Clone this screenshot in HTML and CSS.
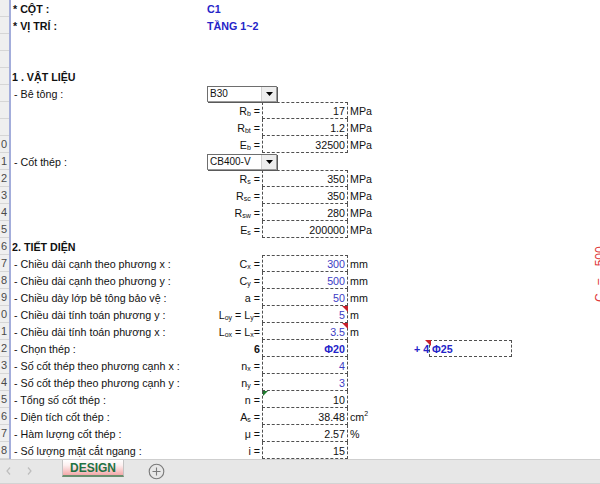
FILE: index.html
```html
<!DOCTYPE html>
<html lang="vi">
<head>
<meta charset="utf-8">
<title>DESIGN</title>
<link rel="stylesheet" href="styles.css">
</head>
<body>
<div class="sheet">
  <div class="row"><div class="rh"></div><div class="sep"></div><div class="cell a bold pad2">* CỘT :</div><div class="cell b bold blue2 wide">C1</div><div></div><div></div><div></div><div></div><div></div></div>
  <div class="row"><div class="rh"></div><div class="sep"></div><div class="cell a bold pad2">* VỊ TRÍ :</div><div class="cell b bold blue2 wide">TẦNG 1~2</div><div></div><div></div><div></div><div></div><div></div></div>
  <div class="row"><div class="rh"></div><div class="sep"></div><div></div><div></div><div></div><div></div><div></div><div></div><div></div></div>
  <div class="row"><div class="rh"></div><div class="sep"></div><div></div><div></div><div></div><div></div><div></div><div></div><div></div></div>
  <div class="row"><div class="rh"></div><div class="sep"></div><div class="cell a bold pad1">1 . VẬT LIỆU</div><div></div><div></div><div></div><div></div><div></div><div></div></div>
  <div class="row"><div class="rh"></div><div class="sep"></div><div class="cell a pad3">- Bê tông :</div><div class="b"><div class="dd"><span class="dd-text">B30</span><span class="dd-btn"><svg width="7" height="4" viewBox="0 0 7 4"><path d="M0 0h7L3.5 4z" fill="#000"/></svg></span></div></div><div></div><div></div><div></div><div></div><div></div></div>
  <div class="row"><div class="rh"></div><div class="sep"></div><div></div><div class="cell lbl">R<span class="s">b</span> =</div><div class="cell v first">17</div><div class="cell u">MPa</div><div></div><div></div><div></div></div>
  <div class="row"><div class="rh"></div><div class="sep"></div><div></div><div class="cell lbl">R<span class="s">bt</span> =</div><div class="cell v">1.2</div><div class="cell u">MPa</div><div></div><div></div><div></div></div>
  <div class="row"><div class="rh">0</div><div class="sep"></div><div></div><div class="cell lbl">E<span class="s">b</span> =</div><div class="cell v">32500</div><div class="cell u">MPa</div><div></div><div></div><div></div></div>
  <div class="row"><div class="rh">1</div><div class="sep"></div><div class="cell a pad3">- Cốt thép :</div><div class="b"><div class="dd"><span class="dd-text">CB400-V</span><span class="dd-btn"><svg width="7" height="4" viewBox="0 0 7 4"><path d="M0 0h7L3.5 4z" fill="#000"/></svg></span></div></div><div></div><div></div><div></div><div></div><div></div></div>
  <div class="row"><div class="rh">2</div><div class="sep"></div><div></div><div class="cell lbl">R<span class="s">s</span> =</div><div class="cell v first">350</div><div class="cell u">MPa</div><div></div><div></div><div></div></div>
  <div class="row"><div class="rh">3</div><div class="sep"></div><div></div><div class="cell lbl">R<span class="s">sc</span> =</div><div class="cell v">350</div><div class="cell u">MPa</div><div></div><div></div><div></div></div>
  <div class="row"><div class="rh">4</div><div class="sep"></div><div></div><div class="cell lbl">R<span class="s">sw</span> =</div><div class="cell v">280</div><div class="cell u">MPa</div><div></div><div></div><div></div></div>
  <div class="row"><div class="rh">5</div><div class="sep"></div><div></div><div class="cell lbl">E<span class="s">s</span> =</div><div class="cell v">200000</div><div class="cell u">MPa</div><div></div><div></div><div></div></div>
  <div class="row"><div class="rh">6</div><div class="sep"></div><div class="cell a bold pad1">2. TIẾT DIỆN</div><div></div><div></div><div></div><div></div><div></div><div></div></div>
  <div class="row"><div class="rh">7</div><div class="sep"></div><div class="cell a pad3">- Chiều dài cạnh theo phương x :</div><div class="cell lbl">C<span class="s">x</span> =</div><div class="cell v first blue">300</div><div class="cell u">mm</div><div></div><div></div><div></div></div>
  <div class="row"><div class="rh">8</div><div class="sep"></div><div class="cell a pad3">- Chiều dài cạnh theo phương y :</div><div class="cell lbl">C<span class="s">y</span> =</div><div class="cell v blue">500</div><div class="cell u">mm</div><div></div><div></div><div></div></div>
  <div class="row"><div class="rh">9</div><div class="sep"></div><div class="cell a pad3">- Chiều dày lớp bê tông bảo vệ :</div><div class="cell lbl">a =</div><div class="cell v blue">50</div><div class="cell u">mm</div><div></div><div></div><div></div></div>
  <div class="row"><div class="rh">0</div><div class="sep"></div><div class="cell a pad3">- Chiều dài tính toán phương y :</div><div class="cell lbl">L<span class="s">oy</span> = L<span class="s">y</span>=</div><div class="cell v blue note">5</div><div class="cell u">m</div><div></div><div></div><div></div></div>
  <div class="row"><div class="rh">1</div><div class="sep"></div><div class="cell a pad3">- Chiều dài tính toán phương x :</div><div class="cell lbl">L<span class="s">ox</span> = L<span class="s">x</span>=</div><div class="cell v blue note">3.5</div><div class="cell u">m</div><div></div><div></div><div></div></div>
  <div class="row"><div class="rh">2</div><div class="sep"></div><div class="cell a pad3">- Chọn thép :</div><div class="cell lbl bold">6</div><div class="cell v bold blue2">Φ20</div><div></div><div class="cell plus bold blue2 note">+ 4</div><div class="cell box bold blue2">Φ25</div><div></div></div>
  <div class="row"><div class="rh">3</div><div class="sep"></div><div class="cell a pad3">- Số cốt thép theo phương cạnh x :</div><div class="cell lbl">n<span class="s">x</span> =</div><div class="cell v blue">4</div><div></div><div></div><div></div><div></div></div>
  <div class="row"><div class="rh">4</div><div class="sep"></div><div class="cell a pad3">- Số cốt thép theo phương cạnh y :</div><div class="cell lbl">n<span class="s">y</span> =</div><div class="cell v blue">3</div><div></div><div></div><div></div><div></div></div>
  <div class="row"><div class="rh">5</div><div class="sep"></div><div class="cell a pad3">- Tổng số cốt thép :</div><div class="cell lbl">n =</div><div class="cell v err">10</div><div></div><div></div><div></div><div></div></div>
  <div class="row"><div class="rh">6</div><div class="sep"></div><div class="cell a pad3">- Diện tích cốt thép :</div><div class="cell lbl">A<span class="s">s</span> =</div><div class="cell v">38.48</div><div class="cell u">cm<span class="sp">2</span></div><div></div><div></div><div></div></div>
  <div class="row"><div class="rh">7</div><div class="sep"></div><div class="cell a pad3">- Hàm lượng cốt thép :</div><div class="cell lbl">μ =</div><div class="cell v">2.57</div><div class="cell u">%</div><div></div><div></div><div></div></div>
  <div class="row"><div class="rh">8</div><div class="sep"></div><div class="cell a pad3">- Số lượng mặt cắt ngang :</div><div class="cell lbl">i =</div><div class="cell v">15</div><div></div><div></div><div></div><div></div></div>

  <div class="dim"><span class="dim-c">C</span><span class="dim-eq">=</span><span class="dim-n">500</span></div>
</div>

<div class="tabbar">
  <div class="nav">
    <svg width="5" height="8" viewBox="0 0 5 8"><path d="M4 0.5L1 4l3 3.5" fill="none" stroke="#bdbdbd" stroke-width="1.2"/></svg>
    <svg width="5" height="8" viewBox="0 0 5 8"><path d="M1 0.5L4 4 1 7.5" fill="none" stroke="#bdbdbd" stroke-width="1.2"/></svg>
  </div>
  <div class="tab">DESIGN</div>
  <div class="add">
    <svg width="17" height="17" viewBox="0 0 17 17"><circle cx="8.5" cy="8.5" r="7.3" fill="none" stroke="#7a7a7a" stroke-width="1.1"/><path d="M8.5 4.5v8M4.5 8.5h8" stroke="#7a7a7a" stroke-width="1.1"/></svg>
  </div>
</div>
</body>
</html>
```

FILE: styles.css
```css
html, body {
  margin: 0;
  padding: 0;
}
body {
  width: 600px;
  height: 484px;
  overflow: hidden;
  background: #fff;
  font-family: "Liberation Sans", Arial, sans-serif;
  font-size: 10.7px;
  color: #111;
}
.sheet {
  position: relative;
  height: 459px;
  overflow: hidden;
}
.row {
  display: grid;
  grid-template-columns: 9px 2px 196px 55px 86px 66px 15px 83px 1fr;
  height: 17px;
}
.row > div {
  box-sizing: border-box;
  min-width: 0;
}
.rh {
  background: #efefef;
  border-bottom: 1px solid #d6d6d6;
  color: #4a4a4a;
  font-size: 11px;
  line-height: 16px;
  text-align: right;
  padding-right: 2px;
  white-space: nowrap;
}
.sep {
  background: #a3addb;
}
.cell {
  padding-top: 2px;
  line-height: 15px;
  white-space: nowrap;
  height: 17px;
}
.pad1 { padding-left: 1px; }
.pad2 { padding-left: 2px; }
.pad3 { padding-left: 3px; }
.bold { font-weight: bold; }
.blue { color: #3b3bc4; }
.blue2 { color: #2424c8; }
.wide { overflow: visible; }
.lbl {
  text-align: right;
  padding-right: 2px;
}
.s {
  font-size: 7px;
  line-height: 0;
  vertical-align: -1px;
}
.sp {
  font-size: 7px;
  line-height: 0;
  vertical-align: 5px;
}
.v {
  position: relative;
  text-align: right;
  padding-right: 2px;
  border-left: 1px dashed #505050;
  border-right: 1px dashed #505050;
  border-bottom: 1px dashed #505050;
}
.v.first {
  border-top: 1px dashed #505050;
  padding-top: 1px;
}
.u {
  padding-left: 2px;
}
.plus {
  position: relative;
  text-align: right;
  padding-right: 1px;
}
.box {
  border: 1px dashed #505050;
  padding-top: 1px;
  padding-left: 2px;
}
.note::after {
  content: "";
  position: absolute;
  top: 0;
  right: -1px;
  width: 0;
  height: 0;
  border-top: 6px solid #c8202a;
  border-left: 6px solid transparent;
}
.plus.note::after {
  right: -2px;
}
.err::before {
  content: "";
  position: absolute;
  top: 0;
  left: 0;
  width: 0;
  height: 0;
  border-top: 5px solid #1f7a2e;
  border-right: 5px solid transparent;
}

/* dropdown */
.b {
  overflow: visible;
}
.dd {
  position: relative;
  z-index: 1;
  margin-top: 1px;
  width: 70px;
  height: 16px;
  box-sizing: border-box;
  background: #fff;
  border: 1px solid #9a9a9a;
  border-left-color: #6e6e6e;
  border-top-color: #6e6e6e;
  box-shadow: 1px 1px 0 #5a5a5a;
  display: flex;
  align-items: stretch;
}
.dd-text {
  flex: 1;
  font-size: 10px;
  line-height: 14px;
  padding-left: 2px;
  color: #111;
}
.dd-btn {
  width: 14px;
  background: #ededed;
  border-left: 1px solid #cfcfcf;
  display: flex;
  align-items: center;
  justify-content: center;
}

/* rotated dimension label (drawing overlay) */
.dim {
  position: absolute;
  left: 594px;
  top: 302px;
  transform-origin: 0 0;
  transform: rotate(-90deg);
  color: #e0393b;
  font-size: 12px;
  line-height: 12px;
  white-space: nowrap;
}
.dim-eq { margin-left: 8px; }
.dim-n { margin-left: 12px; }

/* sheet tab bar */
.tabbar {
  height: 25px;
  box-sizing: border-box;
  background: #e7e7e7;
  border-top: 1px solid #cfcfcf;
  border-bottom: 1px solid #d3d3d3;
  display: flex;
  align-items: flex-start;
}
.nav {
  display: flex;
  gap: 16px;
  padding: 7px 0 0 6px;
  width: 62px;
  box-sizing: border-box;
}
.tab {
  width: 62px;
  height: 17px;
  box-sizing: border-box;
  background: linear-gradient(to bottom, #ffffff 0%, #fdf0f0 35%, #f3a9a9 100%);
  border-left: 1px solid #c4c4c4;
  border-right: 1px solid #c4c4c4;
  border-bottom: 2px solid #6b8f6f;
  color: #237244;
  font-weight: bold;
  font-size: 12px;
  line-height: 16px;
  text-align: center;
}
.add {
  margin-left: 24px;
  padding-top: 3px;
  display: flex;
}
```
